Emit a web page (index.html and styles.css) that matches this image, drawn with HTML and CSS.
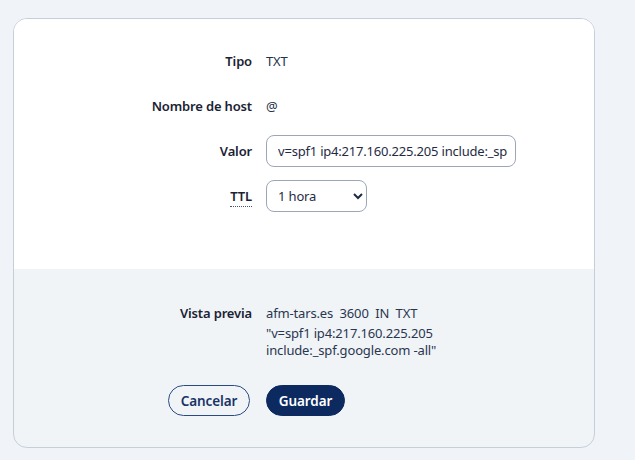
FILE: index.html
```html
<!DOCTYPE html>
<html lang="es">
<head>
<meta charset="utf-8">
<link rel="stylesheet" href="styles.css">
</head>
<body>
<div class="card">
  <div class="main">
    <div class="label">Tipo</div>
    <div class="value">TXT</div>
    <div class="label">Nombre de host</div>
    <div class="value">@</div>
    <label class="label" for="valor">Valor</label>
    <div class="value"><input id="valor" class="input" type="text" value="v=spf1 ip4:217.160.225.205 include:_spf.google.com -all"></div>
    <label class="label" for="ttl"><abbr class="abbr" title="Time to live">TTL</abbr></label>
    <div class="value"><select id="ttl" class="select"><option>1 hora</option></select></div>
  </div>
  <div class="foot">
    <div class="label">Vista previa</div>
    <div class="preview">
      <div class="pv-head">afm-tars.es&nbsp; 3600&nbsp; IN&nbsp; TXT</div>
      <div class="pv-body">"v=spf1 ip4:217.160.225.205<br>include:_spf.google.com -all"</div>
    </div>
    <div class="btn-cell"><button class="btn btn-outline">Cancelar</button></div>
    <div class="btn-cell-left"><button class="btn btn-primary">Guardar</button></div>
  </div>
</div>
</body>
</html>
```
FILE: styles.css
```css
html, body {
  margin: 0;
  padding: 0;
}
body {
  background: #f0f3f7;
  font-family: "Noto Sans", sans-serif;
  font-size: 13px;
  letter-spacing: -0.15px;
  color: #1c2538;
  padding: 18px 0 0 13px;
}
.card {
  width: 580px;
  border: 1px solid #c5cfdb;
  border-radius: 14px;
  background: #f0f4f7;
  overflow: hidden;
}
.main {
  background: #fff;
  display: grid;
  grid-template-columns: 238px 250px;
  column-gap: 14px;
  row-gap: 13px;
  grid-auto-rows: 32px;
  padding: 26px 0 57px 0;
  align-items: center;
}
.label {
  text-align: right;
  font-weight: 600;
  color: #1a2233;
}
.value {
  color: #25324b;
  display: flex;
  align-items: center;
}
.abbr {
  text-decoration: none;
  border-bottom: 1px dotted #46536a;
  padding-bottom: 1px;
}
.input {
  box-sizing: border-box;
  width: 250px;
  height: 32px;
  border: 1px solid #9ba6b7;
  border-radius: 8px;
  padding: 0 8px 0 11px;
  font-family: inherit;
  font-size: 13px;
  letter-spacing: -0.2px;
  color: #1f2b44;
  background: #fff;
}
.select {
  box-sizing: border-box;
  width: 101px;
  height: 32px;
  border: 1px solid #9ba6b7;
  border-radius: 8px;
  padding: 0 7px;
  font-family: inherit;
  font-size: 13px;
  letter-spacing: -0.15px;
  color: #1f2b44;
  background: #fff;
}
.foot {
  display: grid;
  grid-template-columns: 238px 1fr;
  column-gap: 14px;
  row-gap: 26px;
  padding: 35px 0 31px 0;
  align-items: start;
}
.foot .label {
  line-height: 18px;
}
.preview {
  color: #2a3650;
  line-height: 17px;
}
.pv-head {
  margin-bottom: 3px;
  line-height: 18px;
}
.btn-cell {
  display: flex;
  justify-content: flex-end;
  padding-right: 2px;
}
.btn-cell-left {
  display: flex;
}
.btn {
  box-sizing: border-box;
  height: 31px;
  border-radius: 16px;
  font-family: inherit;
  font-size: 13.5px;
  font-weight: 600;
  letter-spacing: -0.1px;
  padding: 0 10px;
  cursor: pointer;
}
.btn-outline {
  width: 82px;
  background: transparent;
  border: 1px solid #2b4a84;
  color: #1b3366;
}
.btn-primary {
  width: 79px;
  background: #0c2a5f;
  border: 1px solid #0c2a5f;
  color: #fff;
}
```
